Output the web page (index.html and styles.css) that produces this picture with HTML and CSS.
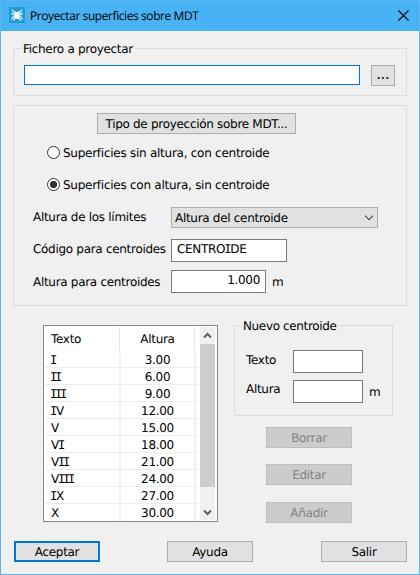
FILE: index.html
```html
<!DOCTYPE html>
<html lang="es">
<head>
<meta charset="utf-8">
<title>Proyectar superficies sobre MDT</title>
<link rel="stylesheet" href="styles.css">
</head>
<body>
<main class="window">
  <header class="titlebar">
    <svg class="app-icon" width="16" height="16" viewBox="0 0 16 16"><rect width="16" height="16" fill="#209bd8"/><g fill="none" stroke="#d6f1fc" stroke-width="1.300"><path d="M7 6L4.500 5 3.500 2.500M9 6l2.500-1 1-2.500M7 7.500H4L2.500 6M9 7.500h3L13.500 6M7 9L4 10 2.500 12.500M9 9l3 1 1.500 2.500M7 10l-2 2v2M9 10l2 2v2"/></g><path d="M6 4l1 1h2l1-1 .5 2-.2 1.500.5 2.500L9.500 12h-3L5.200 10 5.700 7.500 5.500 6z" fill="#fff"/></svg>
    <h1 class="title">Proyectar superficies sobre MDT</h1>
    <svg class="close" width="11" height="11" viewBox="0 0 11 11"><path d="M.5.5l10 10M10.500.5l-10 10" stroke="#000" stroke-width="1.100"/></svg>
  </header>
  <div class="content">
    <section class="group file-group">
      <h2 class="legend">Fichero a proyectar</h2>
      <div class="file-input"></div>
      <div class="button browse">...</div>
    </section>
    <section class="group options">
      <div class="button type-button">Tipo de proyección sobre MDT...</div>
      <div class="radio-row"><span class="radio"></span><span>Superficies sin altura, con centroide</span></div>
      <div class="radio-row second"><span class="radio checked"></span><span>Superficies con altura, sin centroide</span></div>
      <div class="field limits"><span class="label">Altura de los límites</span>
        <div class="select"><span>Altura del centroide</span><svg width="10" height="6" viewBox="0 0 10 6"><path d="M1 .7l4 4 4-4" fill="none" stroke="#505050" stroke-width="1.200"/></svg></div>
      </div>
      <div class="field code"><span class="label">Código para centroides</span><div class="input code-input">CENTRO<span class="cap-i">I</span>DE</div></div>
      <div class="field height"><span class="label">Altura para centroides</span><div class="input height-input">1.000</div><span class="unit">m</span></div>
    </section>
    <div class="lower">
      <div class="list">
        <div class="table">
          <div class="row head"><span>Texto</span><span>Altura</span><span></span></div>
          <div class="row"><span><i class="cap-i">I</i></span><span>3.00</span><span></span></div>
          <div class="row"><span><i class="cap-i">II</i></span><span>6.00</span><span></span></div>
          <div class="row"><span><i class="cap-i">III</i></span><span>9.00</span><span></span></div>
          <div class="row"><span><i class="cap-i">I</i>V</span><span>12.00</span><span></span></div>
          <div class="row"><span>V</span><span>15.00</span><span></span></div>
          <div class="row"><span>V<i class="cap-i">I</i></span><span>18.00</span><span></span></div>
          <div class="row"><span>V<i class="cap-i">II</i></span><span>21.00</span><span></span></div>
          <div class="row"><span>V<i class="cap-i">III</i></span><span>24.00</span><span></span></div>
          <div class="row"><span><i class="cap-i">I</i>X</span><span>27.00</span><span></span></div>
          <div class="row"><span>X</span><span>30.00</span><span></span></div>
        </div>
        <div class="scrollbar">
          <svg class="arrow" width="9" height="7" viewBox="0 0 9 7"><path d="M1 5.500L4.500 2 8 5.500" fill="none" stroke="#606060" stroke-width="2"/></svg>
          <div class="thumb"></div>
          <svg class="arrow down" width="9" height="7" viewBox="0 0 9 7"><path d="M1 1.500L4.500 5 8 1.500" fill="none" stroke="#606060" stroke-width="2"/></svg>
        </div>
      </div>
      <div class="side">
        <section class="group new-group">
          <h2 class="legend">Nuevo centroide</h2>
          <div class="new-row"><span class="new-label">Texto</span><div class="input new-input"></div></div>
          <div class="new-row alt"><span class="new-label">Altura</span><div class="input new-input"></div><span class="unit">m</span></div>
        </section>
        <div class="actions">
          <div class="button disabled">Borrar</div>
          <div class="button disabled edit">Editar</div>
          <div class="button disabled add">Añadir</div>
        </div>
      </div>
    </div>
    <footer class="footer">
      <div class="button default">Aceptar</div>
      <div class="button">Ayuda</div>
      <div class="button">Salir</div>
    </footer>
  </div>
</main>
</body>
</html>
```
FILE: styles.css
```css
* { box-sizing: border-box; }
body {
  margin: 0;
  font: 12px/14px "DejaVu Sans", sans-serif;
  letter-spacing: -0.3px;
  color: #000;
  text-rendering: geometricPrecision;
}
svg { display: block; flex: none; }
.window {
  width: 420px;
  height: 575px;
  background: #f0f0f0;
  border: 1px solid #57b6f3;
  border-top: 0;
  display: flex;
  flex-direction: column;
}
.titlebar {
  height: 31px;
  flex: none;
  display: flex;
  align-items: flex-start;
  background: #49b2f4;
  border-top: 1px solid #57b6f3;
  padding: 6px 10px 0 8px;
}
.title {
  margin: 1px 0 0 5px;
  font: 12px/16px "Open Sans", "Noto Sans", sans-serif;
  letter-spacing: -0.42px;
  flex: 1;
}
.close { margin-top: 3px; }
.content { padding: 17px 12px 0; }

.group { border: 1px solid #dcdcdc; position: relative; }
.legend {
  position: absolute;
  top: -7px;
  left: 7px;
  margin: 0;
  padding: 0 2px;
  font: inherit;
  white-space: nowrap;
  background: #f0f0f0;
}
.button {
  width: 86px;
  height: 21px;
  border: 1px solid #adadad;
  background: #e1e1e1;
  text-align: center;
  line-height: 20px;
  white-space: nowrap;
}
.button.disabled { background: #cccccc; border-color: #bfbfbf; color: #838383; }
.button.default { border: 2px solid #0078d7; line-height: 18px; }
.input { background: #fff; border: 1px solid #7a7a7a; height: 23px; line-height: 18px; }

.file-group {
  height: 48px;
  display: flex;
  justify-content: space-between;
  padding: 16px 11px 0 10px;
}
.file-input { width: 336px; height: 20px; background: #fff; border: 1px solid #0078d7; }
.browse { width: 24px; letter-spacing: 0.2px; color: #333; font-weight: bold; font-size: 11px; }

.options { height: 201px; margin-top: 9px; padding: 7px 0 0 19px; }
.type-button { width: 199px; margin-left: 64px; }
.radio-row { display: flex; gap: 3px; height: 14px; margin: 12px 0 0 14px; letter-spacing: -0.26px; }
.radio-row.second { margin-top: 18px; }
.radio {
  width: 13px;
  height: 13px;
  border: 1px solid #333;
  border-radius: 50%;
  background: #fff;
}
.radio.checked { background: radial-gradient(circle, #333 3.3px, #fff 4px); }
.field { display: flex; }
.label { width: 138px; line-height: 20px; white-space: nowrap; }
.limits { margin-top: 15px; }
.select {
  width: 207px;
  height: 21px;
  border: 1px solid #adadad;
  background: #e1e1e1;
  padding: 0 3px;
  display: flex;
  justify-content: space-between;
  line-height: 20px;
}
.select svg { margin-top: 7px; }
.code { margin-top: 11px; }
.code-input { width: 116px; padding-left: 5px; }
.height { margin-top: 8px; }
.height .label, .unit { line-height: 24px; }
.height-input { width: 95px; text-align: right; padding-right: 5px; }
.unit { margin-left: 6px; }

.lower { display: flex; gap: 16px; margin: 19px 0 0 30px; }
.list {
  width: 175px;
  height: 197px;
  background: #fff;
  border: 1px solid #828790;
  display: flex;
  padding-left: 1px;
}
.table { width: 154px; flex: none; }
.row {
  display: grid;
  grid-template-columns: 76px 75px 3px;
  height: 17px;
  line-height: 18px;
  border-bottom: 1px solid #ededed;
}
.row:last-child { border-bottom: 0; }
.row span { border-right: 2px solid #ecf0f9; white-space: nowrap; height: 17px; }
.row span:first-child { padding-left: 6px; }
.row span:nth-child(2) { text-align: center; }
.row span:last-child { border: 0; }
.head { height: 25px; padding-top: 1px; line-height: 24px; border: 0; }
.head span { height: 24px; border-right: 1px solid #e5e5e5; margin-right: 1px; }
.cap-i {
  font-family: "DejaVu Sans Mono", monospace;
  font-style: normal;
  letter-spacing: -2.2px;
  margin: 0 1px 0 -1px;
}
.scrollbar {
  width: 15px;
  height: 193px;
  margin: 1px 0 0 1px;
  background: #f0f0f0;
  display: flex;
  flex-direction: column;
  align-items: center;
}
.arrow { margin: 5px 0; }
.thumb { width: 15px; height: 143px; background: #cdcdcd; }
.arrow.down { margin: 22px 0 0; }

.new-group { width: 159px; height: 91px; padding: 24px 0 0 11px; }
.new-group .legend { left: 6px; letter-spacing: -0.36px; }
.new-row { display: flex; height: 23px; }
.new-row.alt { margin-top: 7px; }
.new-label { width: 47px; line-height: 20px; }
.new-row.alt .new-label { line-height: 18px; }
.new-input { width: 70px; }
.new-row .unit { line-height: 24px; }
.actions { margin: 11px 0 0 32px; }
.edit { margin-top: 16px; }
.add { margin-top: 17px; }

.footer { display: flex; margin: 18px 0 0 1px; }
.footer .button:nth-child(2) { margin-left: 67px; }
.footer .button:nth-child(3) { margin-left: 68px; }
```
